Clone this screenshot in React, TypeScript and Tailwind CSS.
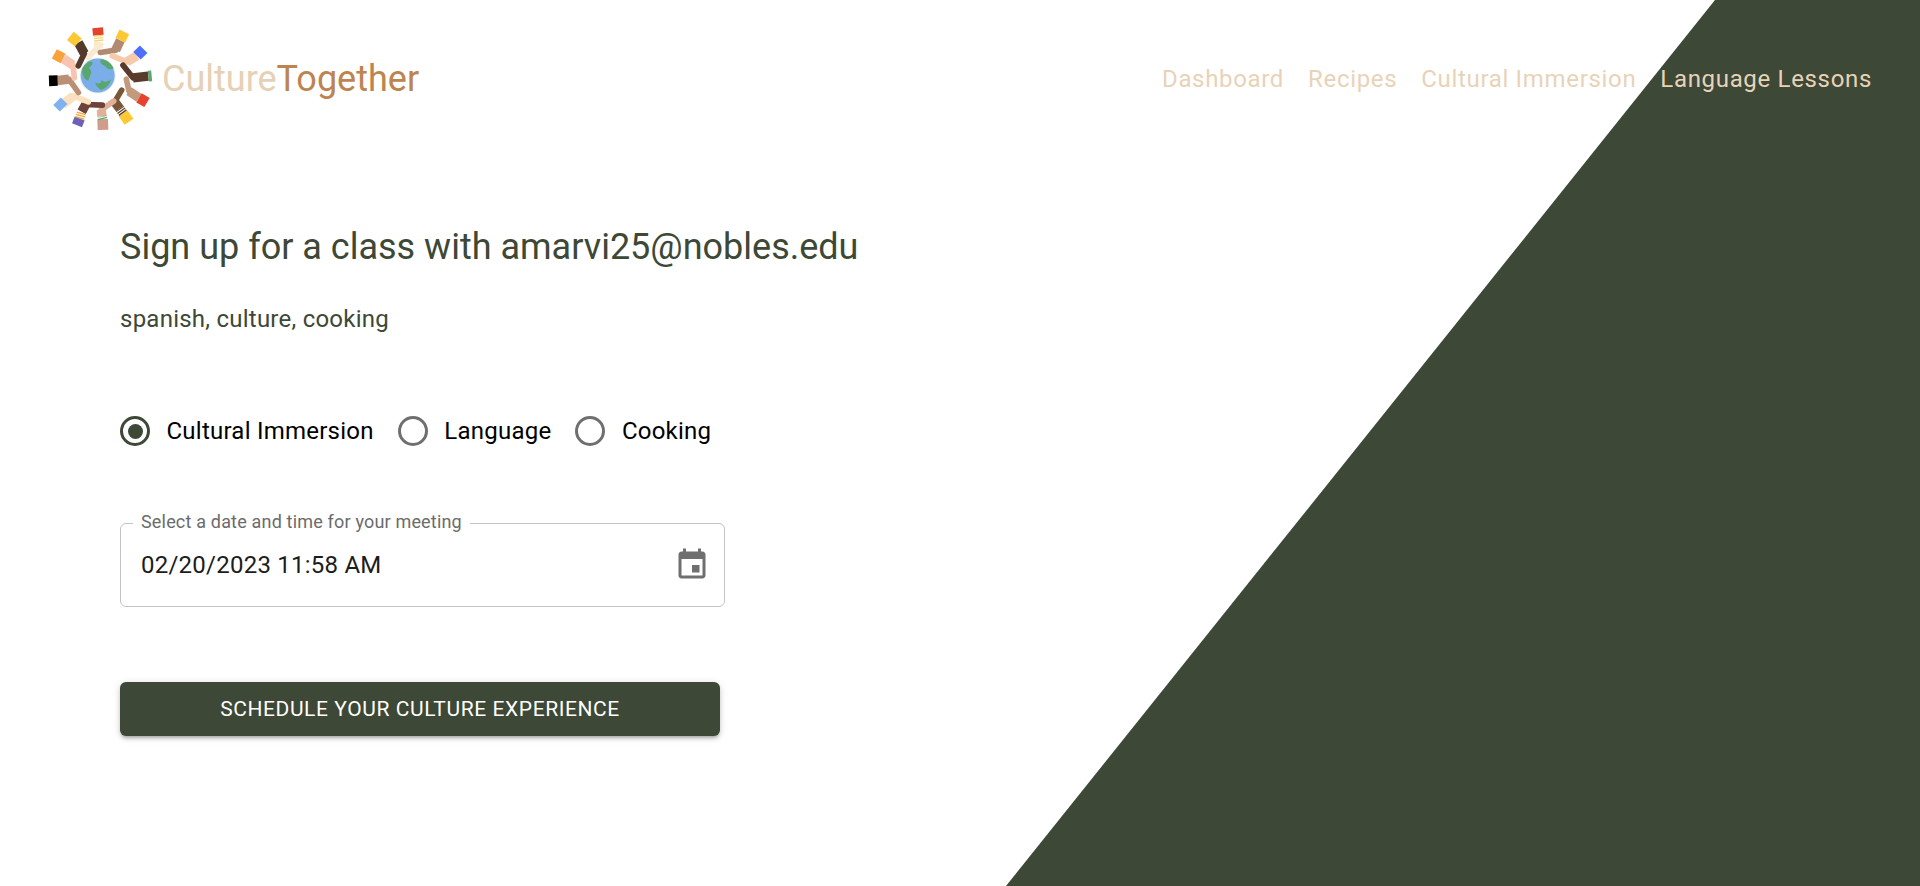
import React from 'react';

const arms = [
  { cuff: [204, 58, 206, 80], band: [206, 80, 208, 100], arm: [208, 100, 205, 116], hand: [205, 116, 175, 146], cuffColor: '#e5432d', bandColor: '#f5d76e', armColor: '#fbe9cf' },
  { cuff: [284, 70, 272, 95], band: null, arm: [272, 95, 258, 125], hand: [258, 125, 212, 132], cuffColor: '#fcc934', bandColor: '', armColor: '#b08b72' },
  { cuff: [342, 122, 322, 142], band: null, arm: [322, 142, 292, 160], hand: [292, 160, 248, 142], cuffColor: '#4f6ffb', bandColor: '', armColor: '#f6c9a8' },
  { cuff: [366, 202, 356, 203], band: null, arm: [356, 203, 310, 208], hand: [310, 208, 280, 170], cuffColor: '#5ba56f', bandColor: '', armColor: '#5a3a2b' },
  { cuff: [352, 282, 328, 268], band: null, arm: [328, 268, 298, 248], hand: [298, 248, 290, 212], cuffColor: '#e5432d', bandColor: '', armColor: '#c39a7c' },
  { cuff: [298, 340, 280, 314], band: [280, 314, 270, 300], arm: [270, 300, 255, 280], hand: [255, 280, 276, 245], cuffColor: '#fcc934', bandColor: '#5b4332', armColor: '#7a5638' },
  { cuff: [220, 364, 219, 332], band: [219, 332, 217, 324], arm: [217, 324, 215, 304], hand: [215, 304, 252, 278], cuffColor: '#cf9d8a', bandColor: '#59a86b', armColor: '#e0b09a' },
  { cuff: [142, 350, 150, 330], band: [150, 330, 156, 310], arm: [156, 310, 168, 288], hand: [168, 288, 218, 290], cuffColor: '#6b62b8', bandColor: '#f0a63a', armColor: '#6d4238' },
  { cuff: [82, 278, 102, 298], band: null, arm: [98, 288, 132, 262], hand: [132, 262, 176, 280], cuffColor: '#7fb2ee', bandColor: '', armColor: '#fbe0c0' },
  { cuff: [58, 217, 84, 216], band: null, arm: [84, 216, 118, 212], hand: [118, 212, 146, 252], cuffColor: '#000000', bandColor: '', armColor: '#bb8f73' },
  { cuff: [74, 136, 100, 150], band: null, arm: [100, 150, 130, 170], hand: [130, 170, 134, 208], cuffColor: '#f9a13a', bandColor: '', armColor: '#f6c4b0' },
  { cuff: [122, 82, 146, 102], band: null, arm: [146, 102, 164, 135], hand: [164, 135, 146, 172], cuffColor: '#fcc934', bandColor: '', armColor: '#55392a' },
];

const Logo = () => (
  <svg width="105" height="107" viewBox="55 50 315 320" className="shrink-0">
    {arms.map((a, i) => (
      <g key={i} fill="none">
        <line x1={a.arm[0]} y1={a.arm[1]} x2={a.arm[2]} y2={a.arm[3]} stroke={a.armColor} strokeWidth="28" />
        <line x1={a.hand[0]} y1={a.hand[1]} x2={a.hand[2]} y2={a.hand[3]} stroke={a.armColor} strokeWidth="17" strokeLinecap="round" />
        <line x1={a.cuff[0]} y1={a.cuff[1]} x2={a.cuff[2]} y2={a.cuff[3]} stroke={a.cuffColor} strokeWidth="32" />
        {a.band && <line x1={a.band[0]} y1={a.band[1]} x2={a.band[2]} y2={a.band[3]} stroke={a.bandColor} strokeWidth="28" strokeDasharray="4 3" />}
      </g>
    ))}
    <circle cx="204" cy="201" r="54" fill="#e8f0ea" />
    <circle cx="204" cy="201" r="51" fill="#7baee8" />
    <path d="M158 180c8-14 22-24 28-20 8 4-2 14-8 18 6 8 10 14 4 22-4 8-4 18-10 16-10-6-16-22-14-36z" fill="#5aa66f" />
    <path d="M216 152c16 2 30 12 36 28-10 4-20 2-24-6-6-4-16-8-16-16 0-4 2-6 4-6z" fill="#5aa66f" />
    <path d="M198 222c6-10 16-10 22-4 8 4 16 0 24-6-2 12-14 30-32 32-6-8-16-12-14-22z" fill="#5aa66f" />
    <circle cx="206" cy="216" r="9" fill="#7baee8" />
  </svg>
);

const Radio = ({ label, checked }: { label: string; checked?: boolean }) => (
  <label className="flex items-center gap-[16.5px]">
    <span className={`flex h-[30px] w-[30px] items-center justify-center rounded-full border-[3px] ${checked ? 'border-[#3d4836]' : 'border-[#6f6f6f]'}`}>
      {checked && <span className="h-[15px] w-[15px] rounded-full bg-[#3d4836]" />}
    </span>
    <span className="text-[24px] leading-none tracking-[0.01em] text-black">{label}</span>
  </label>
);

export default function App() {
  return (
    <div className="relative h-[886px] w-full overflow-hidden bg-white font-['Roboto',sans-serif]">
      {/* diagonal backdrop */}
      <svg className="absolute inset-0 h-full w-full" viewBox="0 0 1920 886">
        <polygon points="1715,0 1920,0 1920,886 1006,886" fill="#3d4836" />
      </svg>

      <div className="relative">
        <header className="flex items-center justify-between pl-[48px] pr-[48px] pt-[25px]">
          <div className="flex items-center">
            <Logo />
            <span className="ml-[9px] text-[36px] font-normal leading-none">
              <span className="text-[#e6d1b5]">Culture</span>
              <span className="text-[#bd8450]">Together</span>
            </span>
          </div>
          <nav className="flex items-center gap-[24px] text-[24px] leading-none tracking-[0.028em] text-[#e8d3b8]">
            <a>Dashboard</a>
            <a>Recipes</a>
            <a>Cultural Immersion</a>
            <a>Language Lessons</a>
          </nav>
        </header>

        <main className="pl-[120px] pt-[91px]">
          <h1 className="text-[36px] leading-[48px] text-[#3d4836]">Sign up for a class with amarvi25@nobles.edu</h1>
          <p className="mt-[32px] text-[24px] leading-[32px] tracking-[0.01em] text-[#3d4836]">spanish, culture, cooking</p>

          <div className="mt-[81px] flex items-center gap-[24px]">
            <Radio label="Cultural Immersion" checked />
            <Radio label="Language" />
            <Radio label="Cooking" />
          </div>

          <fieldset className="relative mt-[77px] flex h-[84px] w-[605px] items-center justify-between rounded-[6px] border border-[#c4c4c4] pl-[20px] pr-[14px]">
            <legend className="absolute -top-[12px] left-[12px] bg-white px-[8px] text-[18px] leading-[20px] tracking-[0.01em] text-[#6b6b6b]">Select a date and time for your meeting</legend>
            <span className="text-[24px] tracking-[0.01em] text-[#1c1c1c]">02/20/2023 11:58 AM</span>
            <svg width="36" height="36" viewBox="0 0 24 24" fill="#6f6f6f">
              <path d="M17 12h-5v5h5v-5zM16 1v2H8V1H6v2H5c-1.11 0-1.99.9-1.99 2L3 19c0 1.1.89 2 2 2h14c1.1 0 2-.9 2-2V5c0-1.1-.9-2-2-2h-1V1h-2zm3 18H5V8h14v11z" />
            </svg>
          </fieldset>

          <button className="mt-[75px] flex h-[54px] w-[600px] items-center justify-center rounded-[6px] bg-[#3d4836] pt-[1px] text-[21px] font-normal uppercase tracking-[0.028em] text-white shadow-[0_3px_3px_-2px_rgba(0,0,0,0.2),0_3px_4px_0_rgba(0,0,0,0.14),0_1px_8px_0_rgba(0,0,0,0.12)]">
            Schedule your culture experience
          </button>
        </main>
      </div>
    </div>
  );
}
